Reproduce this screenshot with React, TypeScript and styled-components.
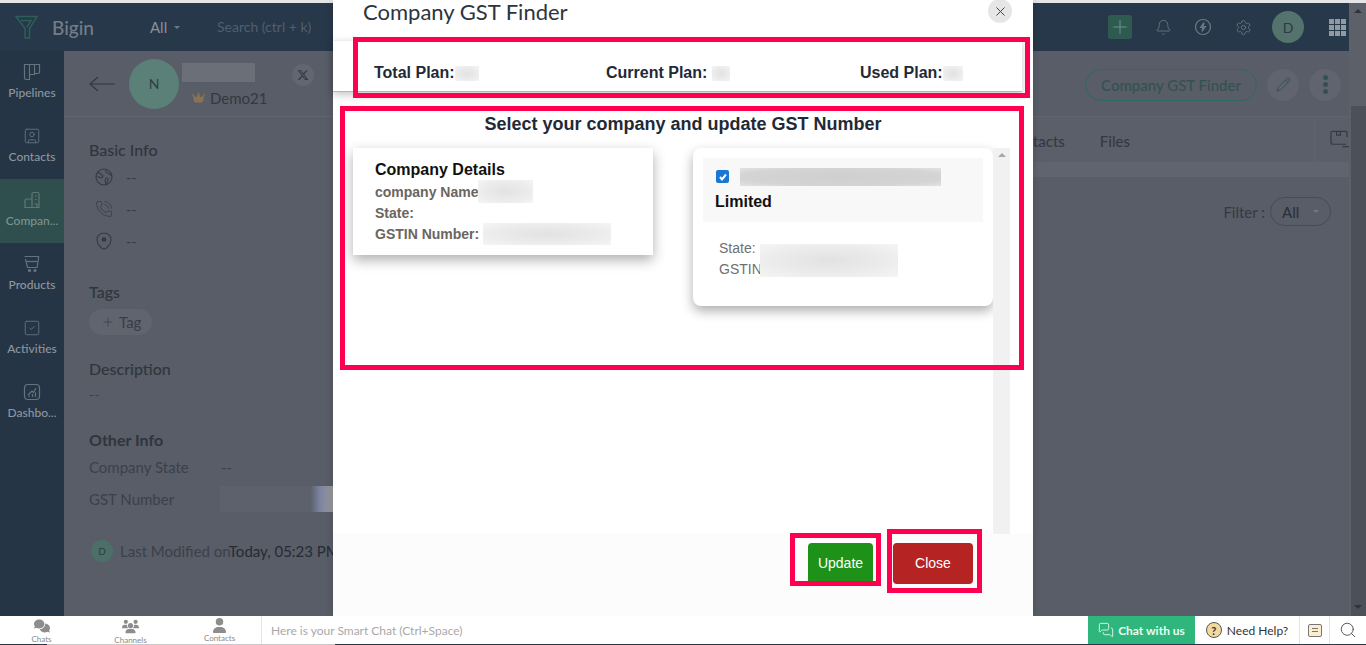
import styled, { createGlobalStyle } from 'styled-components';
import { Bell, MessagesSquare, Pencil, PhoneCall, Plus, Search, Settings, SquareCheck, SquareUser, X } from 'lucide-react';
import { FaComments, FaCrown, FaUser, FaUsers, FaXTwitter } from 'react-icons/fa6';

const GlobalStyle = createGlobalStyle`
  html, body {
    margin: 0;
    padding: 0;
    height: 645px;
    overflow: hidden;
    background: #fff;
    font-family: Lato, "Liberation Sans", sans-serif;
  }
  * { box-sizing: border-box; }
`;

const Page = styled.div`
  position: relative;
  width: 1366px;
  height: 645px;
  display: flex;
  flex-direction: column;
  overflow: hidden;
`;

const TopStrip = styled.div`
  height: 3px;
  flex: none;
  background: #e4e5e6;
`;

const Shell = styled.div`
  flex: 1;
  min-height: 0;
  display: flex;
`;

const ShellMain = styled.div`
  flex: 1;
  min-width: 0;
  display: flex;
  flex-direction: column;
`;

const AppHeader = styled.header`
  height: 48px;
  flex: none;
  display: flex;
  align-items: center;
  padding-left: 15px;
  background: #27384a;
  color: #747e88;
`;

const Brand = styled.div`
  display: flex;
  align-items: center;
  gap: 14px;
  width: 135px;
  font-size: 19px;
  font-weight: 500;
`;

const ScopeSelect = styled.div`
  display: flex;
  align-items: center;
  gap: 7px;
  width: 67px;
  font-size: 15px;
  color: #87919b;
`;

const Caret = styled.span`
  width: 0;
  height: 0;
  border-left: 3px solid transparent;
  border-right: 3px solid transparent;
  border-top: 3px solid #6f7983;
`;

const SearchHint = styled.span`
  margin-bottom: 2px;
  font-size: 14px;
  color: #4f5f6f;
`;

const HeaderActions = styled.div`
  margin-left: auto;
  display: flex;
  align-items: center;
  color: #6f7a85;
`;

const HeaderIcon = styled.span`
  width: 40px;
  display: flex;
  justify-content: center;
`;

const AddButton = styled.span`
  width: 24px;
  height: 24px;
  margin-right: 11px;
  display: flex;
  align-items: center;
  justify-content: center;
  border-radius: 3px;
  background: #2f5a50;
  color: #6f9c8e;
`;

const UserCircle = styled.span`
  width: 32px;
  height: 32px;
  margin-left: 9px;
  margin-right: 25px;
  display: flex;
  align-items: center;
  justify-content: center;
  border-radius: 50%;
  background: #53736c;
  color: #2c3a42;
  font-size: 14px;
`;

const AppGrid = styled.div`
  display: grid;
  grid-template-columns: repeat(3, 5px);
  gap: 1px;
  margin-right: 3px;
`;

const GridDot = styled.i`
  width: 5px;
  height: 5px;
  background: #9199a1;
`;

const Workspace = styled.div`
  flex: 1;
  min-height: 0;
  display: flex;
`;

const Sidebar = styled.nav`
  width: 64px;
  background: #263545;
`;

const NavItem = styled.div<{ $active?: boolean }>`
  height: 64px;
  padding-top: 12px;
  display: flex;
  flex-direction: column;
  align-items: center;
  gap: 4px;
  background: ${(p) => (p.$active ? '#2e4f4e' : 'transparent')};
  color: ${(p) => (p.$active ? '#5f7774' : '#66727d')};
`;

const NavLabel = styled.span<{ $active?: boolean }>`
  font-size: 12px;
  line-height: 16px;
  font-weight: 500;
  color: ${(p) => (p.$active ? '#7f918f' : '#8d969f')};
`;

const Content = styled.main`
  flex: 1;
  min-width: 0;
  display: flex;
  flex-direction: column;
  background: #585d67;
  color: #2f353e;
`;

const ProfileBar = styled.div`
  height: 66px;
  flex: none;
  display: flex;
  align-items: center;
  padding-left: 25px;
  padding-right: 8px;
  border-bottom: 1px solid #5f646e;
`;

const BackArrow = styled.span`
  width: 40px;
  display: flex;
  color: #33393f;
`;

const CompanyAvatar = styled.span`
  width: 50px;
  height: 50px;
  display: flex;
  align-items: center;
  justify-content: center;
  border-radius: 50%;
  background: #5a8078;
  font-size: 14px;
  color: #2f3c42;
`;

const ProfileName = styled.div`
  margin-left: 3px;
  display: flex;
  flex-direction: column;
  gap: 9px;
`;

const NameBlur = styled.div`
  width: 73px;
  height: 19px;
  background: #6b6f78;
`;

const Owner = styled.span`
  display: flex;
  align-items: center;
  gap: 5px;
  margin-left: 10px;
  font-size: 15px;
  line-height: 14px;
  color: #33393f;
`;

const SocialBadge = styled.span`
  width: 22px;
  height: 22px;
  margin-left: 25px;
  margin-bottom: 18px;
  display: flex;
  align-items: center;
  justify-content: center;
  border-radius: 50%;
  background: #626670;
  color: #33393f;
`;

const ProfileActions = styled.div`
  margin-left: auto;
  margin-top: 2px;
  display: flex;
  align-items: center;
  gap: 10px;
`;

const FinderButton = styled.span`
  width: 172px;
  height: 32px;
  display: flex;
  align-items: center;
  justify-content: center;
  border: 1px solid #2f6a5e;
  border-radius: 16px;
  font-size: 15px;
  font-weight: 500;
  color: #33524f;
`;

const RoundAction = styled.span`
  width: 32px;
  height: 32px;
  display: flex;
  align-items: center;
  justify-content: center;
  border-radius: 50%;
  background: #5f646e;
  color: #33524f;
`;

const DotStack = styled.span`
  display: flex;
  flex-direction: column;
  gap: 2px;
`;

const StackDot = styled.i`
  width: 5px;
  height: 5px;
  border-radius: 50%;
  background: #33524f;
`;

const Panels = styled.div`
  flex: 1;
  min-height: 0;
  display: flex;
`;

const DetailPane = styled.section`
  width: 269px;
  flex: none;
  padding: 24px 0 0 25px;
  overflow: hidden;
  white-space: nowrap;
`;

const SectionTitle = styled.h3<{ $bold?: boolean; $gap?: number }>`
  margin: ${(p) => p.$gap ?? 0}px 0 0;
  font-size: 16px;
  line-height: 18px;
  font-weight: ${(p) => (p.$bold ? 700 : 500)};
  color: #2f353e;
`;

const InfoRow = styled.div`
  height: 32px;
  display: flex;
  align-items: center;
  padding-left: 6px;
  gap: 13px;
  font-size: 14px;
  color: #343a43;
`;

const InfoList = styled.div`
  margin-top: 2px;
`;

const TagPill = styled.span`
  width: 63px;
  height: 26px;
  margin-top: 8px;
  display: flex;
  align-items: center;
  gap: 4px;
  padding-left: 12px;
  border-radius: 13px;
  background: #5f646e;
  font-size: 15px;
  color: #383e47;
`;

const PlainDash = styled.div`
  margin-top: 8px;
  font-size: 14px;
  line-height: 18px;
  color: #3b414a;
`;

const FieldRow = styled.div<{ $gap: number }>`
  display: flex;
  align-items: center;
  height: 26px;
  margin-top: ${(p) => p.$gap}px;
  font-size: 15px;
  color: #3b414a;
`;

const FieldName = styled.span`
  width: 132px;
`;

const GstBlur = styled.span`
  width: 113px;
  height: 26px;
  background: linear-gradient(90deg, #5c616b 0 80%, #7a82a0 88%, #9a9a9a 100%);
`;

const Modified = styled.div`
  margin-top: 28px;
  display: flex;
  align-items: center;
  gap: 7px;
  font-size: 15px;
  color: #3b414a;
`;

const ModifiedAvatar = styled.span`
  width: 22px;
  height: 22px;
  flex: none;
  margin-left: 2px;
  display: flex;
  align-items: center;
  justify-content: center;
  border-radius: 50%;
  background: #4c7068;
  font-size: 10px;
  color: #2f3c42;
`;

const DarkText = styled.span`
  color: #262b33;
`;

const RecordPane = styled.section`
  flex: 1;
  min-width: 0;
  display: flex;
  flex-direction: column;
`;

const TabRow = styled.div`
  height: 45px;
  display: flex;
  align-items: center;
  justify-content: flex-end;
  gap: 35px;
  font-size: 15px;
  font-weight: 500;
  color: #343a43;
  background: #5a5f69;
`;

const TabName = styled.span`
  margin-top: 2px;
`;

const TabTool = styled.span`
  width: 35px;
  height: 45px;
  margin-left: 149px;
  display: flex;
  align-items: center;
  padding-left: 15px;
  overflow: hidden;
  border-left: 1px solid #5f646e;
`;

const TabBand = styled.div`
  height: 15px;
  background: #5f646e;
`;

const FilterRow = styled.div`
  margin-top: 20px;
  padding-right: 18px;
  display: flex;
  align-items: center;
  justify-content: flex-end;
  gap: 5px;
  font-size: 15px;
  color: #343a43;
`;

const FilterSelect = styled.span`
  width: 61px;
  height: 29px;
  display: flex;
  align-items: center;
  gap: 14px;
  padding-left: 11px;
  border: 1px solid #464b55;
  border-radius: 15px;
  font-weight: 500;
  color: #2c3139;
`;

const PageScroll = styled.div`
  width: 17px;
  flex: none;
  display: flex;
  flex-direction: column;
  align-items: center;
  justify-content: space-between;
  padding: 6px 0 7px;
  background: linear-gradient(90deg, #5c6069 2px, transparent 2px),
    linear-gradient(#5c6069 0 103px, #4b5059 103px);
`;

const ScrollUp = styled.span`
  width: 0;
  height: 0;
  border-left: 4px solid transparent;
  border-right: 4px solid transparent;
  border-bottom: 4px solid #2f343b;
`;

const ScrollDown = styled.span`
  width: 0;
  height: 0;
  border-left: 4px solid transparent;
  border-right: 4px solid transparent;
  border-top: 4px solid #2f343b;
`;

const ChatBar = styled.footer`
  position: relative;
  z-index: 3;
  height: 29px;
  flex: none;
  display: flex;
  align-items: center;
  background: #fff;
  border-bottom: 1px solid #c9c9c9;
  border-image: linear-gradient(90deg, #283848 48px, #c9c9c9 48px, #c9c9c9 336px, #283848 336px) 1;
`;

const ChatTabs = styled.div`
  display: flex;
  margin-top: 2px;
  margin-left: -3px;
`;

const ChatTab = styled.div`
  width: 89px;
  display: flex;
  flex-direction: column;
  align-items: center;
  gap: 1px;
  color: #8d8d8d;
`;

const ChatTabLabel = styled.span`
  font-size: 8px;
  line-height: 9px;
  color: #8a8a8a;
`;

const SmartChat = styled.div`
  flex: 1;
  height: 28px;
  margin-left: -3px;
  padding-left: 9px;
  display: flex;
  align-items: center;
  border-left: 1px solid #e4e4e4;
  font-size: 12px;
  color: #a9a9a9;
`;

const ChatWithUs = styled.div`
  width: 107px;
  height: 28px;
  display: flex;
  align-items: center;
  justify-content: center;
  gap: 4px;
  background: #2fb67c;
  color: #e8fff4;
  font-size: 12px;
  font-weight: 700;
`;

const NeedHelp = styled.div`
  width: 105px;
  height: 28px;
  display: flex;
  align-items: center;
  justify-content: center;
  gap: 5px;
  border-right: 1px solid #e4e4e4;
  font-size: 12px;
  color: #333;
`;

const HelpMark = styled.span`
  width: 16px;
  height: 16px;
  display: flex;
  align-items: center;
  justify-content: center;
  border: 1px solid #555;
  border-radius: 50%;
  background: #f3d9a0;
  font-size: 11px;
  font-weight: 700;
`;

const ChatIcon = styled.span<{ $bordered?: boolean }>`
  width: ${(p) => (p.$bordered ? 30 : 36)}px;
  height: 28px;
  display: flex;
  align-items: center;
  justify-content: center;
  border-right: ${(p) => (p.$bordered ? '1px solid #e4e4e4' : 'none')};
  color: #555;
`;

const NotesIcon = styled.span`
  width: 14px;
  height: 13px;
  display: flex;
  flex-direction: column;
  justify-content: center;
  gap: 2px;
  padding: 0 3px;
  border: 1px solid #777;
  border-radius: 2px;
  background: #fbeed0;
`;

const NotesLine = styled.i`
  height: 1px;
  background: #777;
`;

const Modal = styled.div`
  position: absolute;
  z-index: 2;
  left: 333px;
  top: 0;
  width: 700px;
  height: 616px;
  display: flex;
  flex-direction: column;
  background: #fff;
  font-family: "Liberation Sans", Arial, sans-serif;
  box-shadow: 0 0 8px rgba(0, 0, 0, 0.18);
`;

const ModalHeader = styled.div`
  height: 40px;
  flex: none;
  display: flex;
  justify-content: space-between;
  padding: 0 21px 0 30px;
`;

const ModalTitle = styled.h2`
  margin: 0;
  font-family: Lato, sans-serif;
  font-size: 22px;
  font-weight: 400;
  line-height: 24px;
  color: #2b3440;
`;

const ModalClose = styled.span`
  width: 24px;
  height: 24px;
  margin-top: -1px;
  display: flex;
  align-items: center;
  justify-content: center;
  border-radius: 50%;
  background: #e6e6e6;
  color: #444;
`;

const PlanBar = styled.div`
  height: 52px;
  flex: none;
  display: flex;
  align-items: center;
  padding: 14px 0 0 41px;
  margin-right: 11px;
  background: #fff;
  border-top: 1px solid #eee;
  border-bottom: 1px solid #b5b5b5;
  box-shadow: 0 3px 8px rgba(0, 0, 0, 0.22);
  font-size: 16px;
  font-weight: 700;
  color: #1f2937;
`;

const PlanItem = styled.span<{ $width: number }>`
  width: ${(p) => p.$width}px;
  display: flex;
  align-items: center;
`;

const Redacted = styled.span<{ $w: number; $h: number; $dark?: boolean }>`
  flex: none;
  display: inline-block;
  width: ${(p) => p.$w}px;
  height: ${(p) => p.$h}px;
  background: ${(p) =>
    p.$dark
      ? 'radial-gradient(ellipse at 50% 50%, #cfcfcf 0, #d4d4d4 70%, #e2e2e2 100%)'
      : 'radial-gradient(ellipse at 50% 50%, #e2e2e2 0, #ececec 60%, #f5f5f5 100%)'};
`;

const ModalBody = styled.div`
  flex: 1;
  min-height: 0;
  display: flex;
  flex-direction: column;
  padding-top: 22px;
`;

const BodyHeading = styled.h3`
  margin: 0 0 14px;
  height: 20px;
  text-align: center;
  font-size: 18px;
  line-height: 20px;
  font-weight: 700;
  color: #1f2937;
`;

const BodyColumns = styled.div`
  flex: 1;
  min-height: 0;
  display: flex;
  align-items: flex-start;
  padding-left: 20px;
`;

const DetailCard = styled.div`
  width: 300px;
  height: 107px;
  padding: 12px 0 0 22px;
  background: #fff;
  box-shadow: 0 5px 12px rgba(0, 0, 0, 0.32);
`;

const CardTitle = styled.div`
  font-size: 16px;
  line-height: 19px;
  font-weight: 700;
  color: #111;
`;

const CardLine = styled.div`
  height: 21px;
  display: flex;
  align-items: center;
  font-size: 14px;
  font-weight: 700;
  color: #6b6560;
`;

const CardLines = styled.div`
  margin-top: 2px;
`;

const ResultCard = styled.div`
  width: 300px;
  height: 158px;
  margin-left: 40px;
  padding: 10px;
  background: #fff;
  border-radius: 8px;
  box-shadow: 0 5px 12px rgba(0, 0, 0, 0.32);
`;

const ResultHead = styled.div`
  height: 64px;
  padding: 10px 12px 0 12px;
  background: #f8f8f8;
`;

const CheckRow = styled.div`
  display: flex;
  align-items: center;
  gap: 11px;
  height: 18px;
  margin-left: 1px;
`;

const BlueCheck = styled.span`
  width: 13px;
  height: 13px;
  margin-top: -1px;
  display: flex;
  align-items: center;
  justify-content: center;
  border-radius: 2px;
  background: #1976d2;
`;

const ResultName = styled.div`
  margin-top: 6px;
  font-size: 16px;
  line-height: 20px;
  font-weight: 700;
  color: #111;
`;

const ResultMeta = styled.div`
  margin-top: 16px;
  padding-left: 16px;
  font-size: 14px;
  line-height: 21px;
  color: #6f6f6f;
`;

const MetaLine = styled.div`
  display: flex;
  height: 21px;
`;

const MetaCover = styled.span`
  position: absolute;
  left: 427px;
  top: 244px;
`;

const ResultScroll = styled.div`
  width: 17px;
  height: 386px;
  padding-top: 5px;
  display: flex;
  justify-content: center;
  background: #f1f1f1;
`;

const ScrollTri = styled.span`
  width: 0;
  height: 0;
  border-left: 4px solid transparent;
  border-right: 4px solid transparent;
  border-bottom: 4px solid #a8a8a8;
`;

const ModalFooter = styled.div`
  height: 82px;
  flex: none;
  display: flex;
  gap: 20px;
  padding: 9px 60px 0 475px;
  background: #fcfcfc;
`;

const FooterButton = styled.span<{ $tone: string; $width: number }>`
  width: ${(p) => p.$width}px;
  height: 41px;
  padding-bottom: 2px;
  display: flex;
  align-items: center;
  justify-content: center;
  border-radius: 4px;
  background: ${(p) => p.$tone};
  color: #fff;
  font-size: 14px;
`;

const Annotation = styled.div<{ $x: number; $y: number; $w: number; $h: number }>`
  position: absolute;
  z-index: 4;
  left: ${(p) => p.$x}px;
  top: ${(p) => p.$y}px;
  width: ${(p) => p.$w}px;
  height: ${(p) => p.$h}px;
  border: 5px solid #ff0050;
  pointer-events: none;
`;

const BiginLogo = () => (
  <svg width="23" height="24" viewBox="0 0 23 24" fill="none" stroke="#2c5f57" strokeWidth="1.5">
    <path d="M1 1.5h21l-7.5 12v9.5H10v-9.500z" />
    <path d="M6 5.500h10l-4 6.500" />
  </svg>
);

const PipelinesIcon = () => (
  <svg width="18" height="18" viewBox="0 0 18 18" fill="none" stroke="currentColor" strokeWidth="1.2">
    <path d="M1.500 1.500h5v15h-3.500a1.500 1.500 0 0 1-1.500-1.500zM6.500 1.500h5v10h-5zM11.500 1.500h5v7.500a1.500 1.500 0 0 1-1.500 1.500h-3.500z" />
  </svg>
);

const CompanyIcon = () => (
  <svg width="18" height="18" viewBox="0 0 18 18" fill="none" stroke="currentColor" strokeWidth="1.2">
    <path d="M9 16.500V3a1.500 1.500 0 0 1 1.500-1.500h4A1.500 1.500 0 0 1 16 3v13.500zM9 8H3.500A1.500 1.500 0 0 0 2 9.500v7h7" />
    <path d="M12 5h1.500M12 8.500h1.500M11.500 13h2.500v3.500" />
  </svg>
);

const ProductIcon = () => (
  <svg width="18" height="18" viewBox="0 0 18 18" fill="none" stroke="currentColor" strokeWidth="1.2">
    <path d="M1.500 1.500h14v2.500l-1.500 8.500h-9.500L2.500 4" />
    <path d="M3.500 6.500h11" />
    <circle cx="6.500" cy="15.500" r="1" fill="currentColor" />
    <circle cx="12" cy="15.500" r="1" fill="currentColor" />
  </svg>
);

const DashboardIcon = () => (
  <svg width="18" height="18" viewBox="0 0 18 18" fill="none" stroke="currentColor" strokeWidth="1.2">
    <rect x="1.500" y="1.500" width="15" height="15" rx="3.500" />
    <path d="M5 12l4-4 1.500 1.500L13 5M6 14v-1.500M9.500 14v-3M12.500 14V9.500" />
  </svg>
);

const BoltIcon = () => (
  <svg width="18" height="18" viewBox="0 0 18 18" fill="none" stroke="currentColor" strokeWidth="1.2">
    <circle cx="9" cy="9" r="7.500" />
    <path d="M10 4.500 6.500 9.500H9L8 13.500l3.500-5H9z" />
  </svg>
);

const EarthIcon = () => (
  <svg width="18" height="18" viewBox="0 0 18 18" fill="none" stroke="currentColor" strokeWidth="1.1">
    <circle cx="9" cy="9" r="8" />
    <path d="M3 4.500c2 .5 2.500 2 4 2.500s1 2-.5 2.500c-1 .5-2.500-.5-4-1M11 2c-.500 1.500 0 2.500 1.500 3s3 1 3.500 2.500M11 16c-.500-2-1.500-3-.500-5 .500-1 2-1.500 2.500-.5s-.500 4-2 5.500z" />
  </svg>
);

const PinIcon = () => (
  <svg width="18" height="18" viewBox="0 0 18 18" fill="none" stroke="currentColor" strokeWidth="1.1">
    <path d="M9 1C4.800 1 2 3.800 2 7.500 2 12 6 17 9 17s7-5 7-9.500C16 3.800 13.200 1 9 1z" />
    <circle cx="9" cy="7.500" r="1.800" fill="currentColor" />
  </svg>
);

const ArchiveTool = () => (
  <svg width="20" height="19" viewBox="0 0 20 19" fill="none" stroke="currentColor" strokeWidth="1.3">
    <path d="M17 14.500H3a2 2 0 0 1-2-2V3a2 2 0 0 1 2-2h13a2 2 0 0 1 2 2v4" />
    <path d="M7 1v4h4V1M13 17h7" />
  </svg>
);

const navItems = [
  { label: 'Pipelines', icon: <PipelinesIcon /> },
  { label: 'Contacts', icon: <SquareUser size={18} strokeWidth={1.2} /> },
  { label: 'Compan...', icon: <CompanyIcon />, active: true },
  { label: 'Products', icon: <ProductIcon /> },
  { label: 'Activities', icon: <SquareCheck size={18} strokeWidth={1.2} /> },
  { label: 'Dashbo...', icon: <DashboardIcon /> },
];

const chatTabs = [
  { label: 'Chats', icon: <FaComments size={16} /> },
  { label: 'Channels', icon: <FaUsers size={17} /> },
  { label: 'Contacts', icon: <FaUser size={15} /> },
];

export default function App() {
  return (
    <Page>
      <GlobalStyle />
      <TopStrip />
      <Shell>
        <ShellMain>
          <AppHeader>
            <Brand>
              <BiginLogo />
              Bigin
            </Brand>
            <ScopeSelect>
              All <Caret />
            </ScopeSelect>
            <SearchHint>Search (ctrl + k)</SearchHint>
            <HeaderActions>
              <AddButton>
                <Plus size={22} strokeWidth={1} />
              </AddButton>
              <HeaderIcon>
                <Bell size={17} strokeWidth={1.2} />
              </HeaderIcon>
              <HeaderIcon>
                <BoltIcon />
              </HeaderIcon>
              <HeaderIcon>
                <Settings size={17} strokeWidth={1.2} />
              </HeaderIcon>
              <UserCircle>D</UserCircle>
              <AppGrid>
                {Array.from({ length: 9 }, (_, i) => (
                  <GridDot key={i} />
                ))}
              </AppGrid>
            </HeaderActions>
          </AppHeader>
          <Workspace>
            <Sidebar>
              {navItems.map((item) => (
                <NavItem key={item.label} $active={item.active}>
                  {item.icon}
                  <NavLabel $active={item.active}>{item.label}</NavLabel>
                </NavItem>
              ))}
            </Sidebar>
            <Content>
              <ProfileBar>
                <BackArrow>
                  <svg width="26" height="16" viewBox="0 0 26 16" fill="none" stroke="currentColor" strokeWidth="1.2">
                    <path d="M26 8H1M9 1 1 8l8 7" />
                  </svg>
                </BackArrow>
                <CompanyAvatar>N</CompanyAvatar>
                <ProfileName>
                  <NameBlur />
                  <Owner>
                    <FaCrown size={13} color="#8a7350" />
                    Demo21
                  </Owner>
                </ProfileName>
                <SocialBadge>
                  <FaXTwitter size={12} />
                </SocialBadge>
                <ProfileActions>
                  <FinderButton>Company GST Finder</FinderButton>
                  <RoundAction>
                    <Pencil size={15} strokeWidth={1.6} />
                  </RoundAction>
                  <RoundAction>
                    <DotStack>
                      <StackDot />
                      <StackDot />
                      <StackDot />
                    </DotStack>
                  </RoundAction>
                </ProfileActions>
              </ProfileBar>
              <Panels>
                <DetailPane>
                  <SectionTitle>Basic Info</SectionTitle>
                  <InfoList>
                    <InfoRow>
                      <EarthIcon />
                      --
                    </InfoRow>
                    <InfoRow>
                      <PhoneCall size={18} strokeWidth={1} />
                      --
                    </InfoRow>
                    <InfoRow>
                      <PinIcon />
                      --
                    </InfoRow>
                  </InfoList>
                  <SectionTitle $gap={26}>Tags</SectionTitle>
                  <TagPill>
                    <Plus size={14} strokeWidth={1.2} />
                    Tag
                  </TagPill>
                  <SectionTitle $gap={25}>Description</SectionTitle>
                  <PlainDash>--</PlainDash>
                  <SectionTitle $bold $gap={27}>
                    Other Info
                  </SectionTitle>
                  <FieldRow $gap={5}>
                    <FieldName>Company State</FieldName>
                    --
                  </FieldRow>
                  <FieldRow $gap={6}>
                    <FieldName>GST Number</FieldName>
                    <GstBlur />
                  </FieldRow>
                  <Modified>
                    <ModifiedAvatar>D</ModifiedAvatar>
                    <span>
                      Last Modified on<DarkText>Today, 05:23 PM</DarkText>
                    </span>
                  </Modified>
                </DetailPane>
                <RecordPane>
                  <TabRow>
                    <TabName>Contacts</TabName>
                    <TabName>Files</TabName>
                    <TabTool>
                      <ArchiveTool />
                    </TabTool>
                  </TabRow>
                  <TabBand />
                  <FilterRow>
                    Filter :
                    <FilterSelect>
                      All <Caret />
                    </FilterSelect>
                  </FilterRow>
                </RecordPane>
              </Panels>
            </Content>
          </Workspace>
        </ShellMain>
        <PageScroll>
          <ScrollUp />
          <ScrollDown />
        </PageScroll>
      </Shell>
      <ChatBar>
        <ChatTabs>
          {chatTabs.map((tab) => (
            <ChatTab key={tab.label}>
              {tab.icon}
              <ChatTabLabel>{tab.label}</ChatTabLabel>
            </ChatTab>
          ))}
        </ChatTabs>
        <SmartChat>Here is your Smart Chat (Ctrl+Space)</SmartChat>
        <ChatWithUs>
          <MessagesSquare size={16} strokeWidth={1.3} />
          Chat with us
        </ChatWithUs>
        <NeedHelp>
          <HelpMark>?</HelpMark>
          Need Help?
        </NeedHelp>
        <ChatIcon $bordered>
          <NotesIcon>
            <NotesLine />
            <NotesLine />
          </NotesIcon>
        </ChatIcon>
        <ChatIcon>
          <Search size={18} strokeWidth={1.3} />
        </ChatIcon>
      </ChatBar>

      <Modal>
        <ModalHeader>
          <ModalTitle>Company GST Finder</ModalTitle>
          <ModalClose>
            <X size={15} strokeWidth={1.6} />
          </ModalClose>
        </ModalHeader>
        <PlanBar>
          <PlanItem $width={232}>
            Total Plan:
            <Redacted $w={24} $h={15} />
          </PlanItem>
          <PlanItem $width={254}>
            Current Plan:&nbsp;
            <Redacted $w={18} $h={15} />
          </PlanItem>
          <PlanItem $width={130}>
            Used Plan:
            <Redacted $w={20} $h={15} />
          </PlanItem>
        </PlanBar>
        <ModalBody>
          <BodyHeading>Select your company and update GST Number</BodyHeading>
          <BodyColumns>
            <DetailCard>
              <CardTitle>Company Details</CardTitle>
              <CardLines>
                <CardLine>
                  company Name
                  <Redacted $w={55} $h={23} />
                </CardLine>
                <CardLine>State:</CardLine>
                <CardLine>
                  GSTIN Number:&nbsp;
                  <Redacted $w={128} $h={22} />
                </CardLine>
              </CardLines>
            </DetailCard>
            <ResultCard>
              <ResultHead>
                <CheckRow>
                  <BlueCheck>
                    <svg width="10" height="10" viewBox="0 0 10 10" fill="none" stroke="#fff" strokeWidth="2">
                      <path d="M2 5l2 2.400L8 2.500" />
                    </svg>
                  </BlueCheck>
                  <Redacted $w={201} $h={18} $dark />
                </CheckRow>
                <ResultName>Limited</ResultName>
              </ResultHead>
              <ResultMeta>
                <MetaLine>State:</MetaLine>
                <MetaLine>GSTIN</MetaLine>
              </ResultMeta>
            </ResultCard>
            <ResultScroll>
              <ScrollTri />
            </ResultScroll>
          </BodyColumns>
          <MetaCover>
            <Redacted $w={138} $h={33} />
          </MetaCover>
        </ModalBody>
        <ModalFooter>
          <FooterButton $tone="#1e9218" $width={65}>
            Update
          </FooterButton>
          <FooterButton $tone="#b52323" $width={80}>
            Close
          </FooterButton>
        </ModalFooter>
      </Modal>

      <Annotation $x={353} $y={37} $w={677} $h={61} />
      <Annotation $x={340} $y={106} $w={684} $h={264} />
      <Annotation $x={790} $y={533} $w={91} $h={53} />
      <Annotation $x={887} $y={529} $w={95} $h={64} />
    </Page>
  );
}
